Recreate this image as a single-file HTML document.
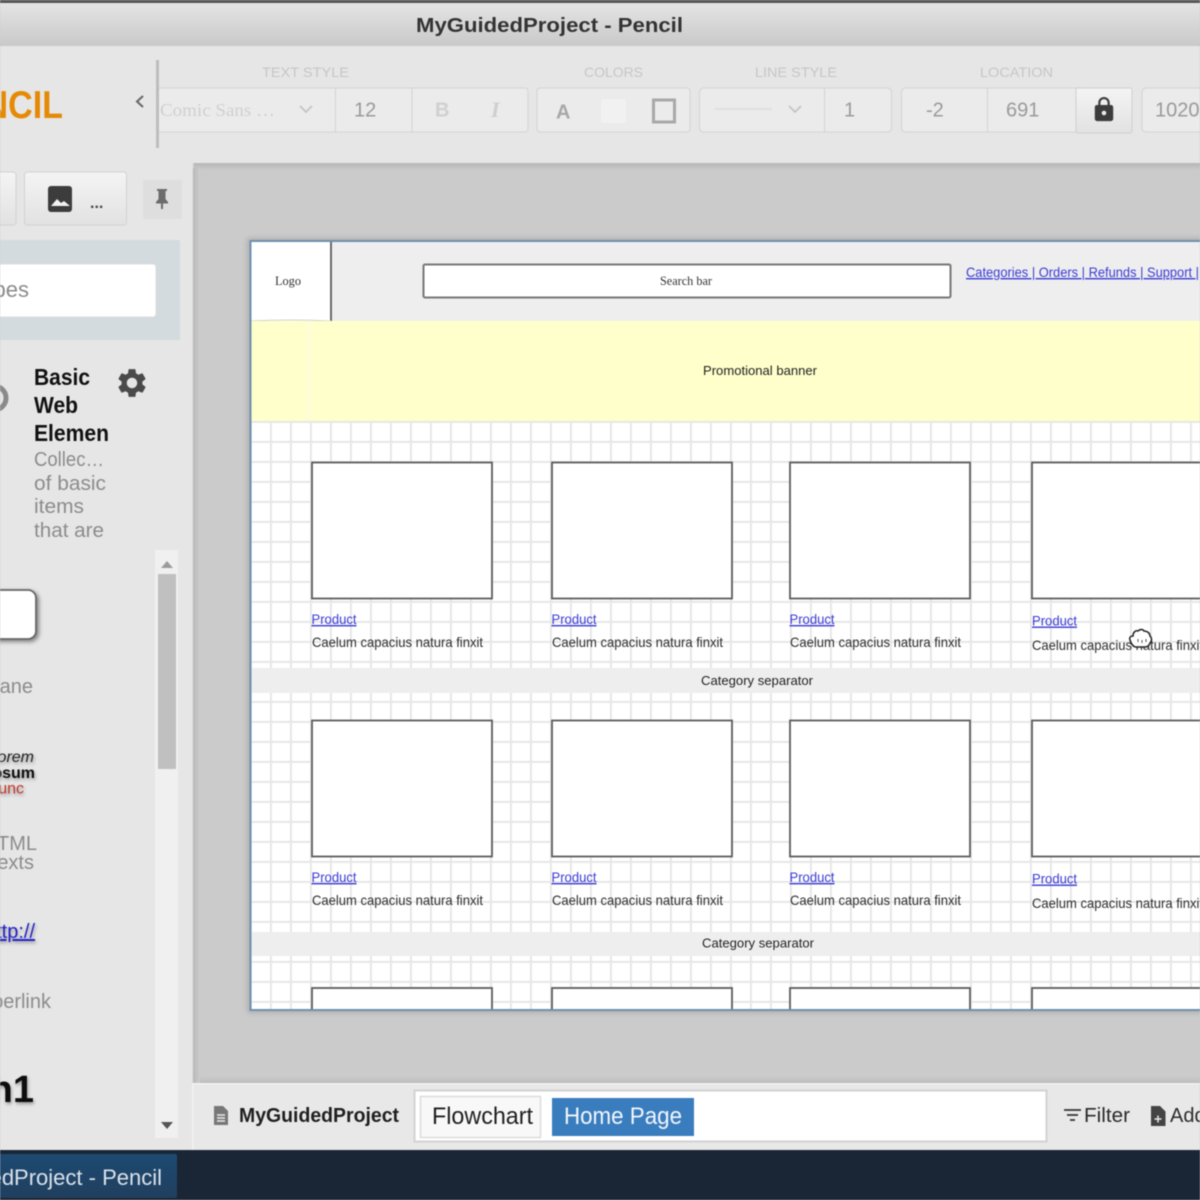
<!DOCTYPE html>
<html><head><meta charset="utf-8"><style>
html,body{margin:0;padding:0;width:1200px;height:1200px;overflow:hidden;background:#cbcbcb}
svg{display:block;filter:blur(.5px)}
text{font-family:"Liberation Sans",sans-serif}
.s{font-family:"Liberation Serif",serif}
.l{fill:#3b3bd6;text-decoration:underline;font-size:14px}
.c{fill:#2e2e2e;font-size:14px}
.lab{fill:#c6c6c6;font-size:14px}
.v{fill:#9a9a9a;font-size:20px}
.g{fill:#8c8c8c;font-size:20px}
.box{fill:#fff;stroke:#5c5c5c;stroke-width:1.800}
</style></head><body>
<svg width="1200" height="1200" viewBox="0 0 1200 1200" xmlns="http://www.w3.org/2000/svg">
<defs>
<linearGradient id="tb" x1="0" y1="0" x2="0" y2="1"><stop offset="0" stop-color="#e6e6e6"/><stop offset="1" stop-color="#c9c9c9"/></linearGradient>
<linearGradient id="btn" x1="0" y1="0" x2="0" y2="1"><stop offset="0" stop-color="#f4f4f4"/><stop offset="1" stop-color="#e2e2e2"/></linearGradient>
<linearGradient id="task" x1="0" y1="0" x2="0" y2="1"><stop offset="0" stop-color="#1d4a72"/><stop offset="1" stop-color="#213f5e"/></linearGradient>
<linearGradient id="sv" x1="0" y1="0" x2="0" y2="1"><stop offset="0" stop-color="#b6b6b6"/><stop offset="1" stop-color="#cbcbcb"/></linearGradient>
<linearGradient id="sh2" x1="0" y1="0" x2="1" y2="0"><stop offset="0" stop-color="#b9b9b9"/><stop offset="1" stop-color="#cbcbcb"/></linearGradient>
<linearGradient id="sb" x1="0" y1="0" x2="0" y2="1"><stop offset="0" stop-color="#cbcbcb"/><stop offset="1" stop-color="#bcbcbc"/></linearGradient>
<pattern id="grid" x="251" y="422" width="20" height="20" patternUnits="userSpaceOnUse"><rect width="20" height="20" fill="#fff"/><rect x="19" width="1" height="20" fill="#e3e3e3"/><rect x="0" width="1" height="20" fill="#ebebeb"/><rect y="19" width="20" height="1" fill="#e3e3e3"/><rect y="0" width="20" height="1" fill="#ebebeb"/></pattern>
<filter id="sh" x="-30%" y="-30%" width="160%" height="160%"><feDropShadow dx="2" dy="2" stdDeviation="2" flood-color="#000" flood-opacity=".45"/></filter>
<filter id="ts" x="-20%" y="-20%" width="140%" height="150%"><feDropShadow dx="1" dy="2" stdDeviation="1.500" flood-color="#000" flood-opacity=".35"/></filter>
<filter id="bl" x="-5%" y="-5%" width="110%" height="110%"><feGaussianBlur stdDeviation="2.500"/></filter>
</defs>

<rect width="1200" height="1200" fill="#cbcbcb"/>

<!-- title bar -->
<rect width="1200" height="46" fill="url(#tb)"/>
<rect width="1200" height="3" fill="#555"/>
<text x="416" y="32" font-size="20" font-weight="bold" fill="#333" textLength="267" lengthAdjust="spacingAndGlyphs">MyGuidedProject - Pencil</text>

<!-- toolbar -->
<rect y="46" width="1200" height="117" fill="#e6e6e6"/>
<rect y="163" x="192" width="1008" height="7" fill="url(#sv)"/>
<text x="63" y="118" text-anchor="end" font-size="39" font-weight="bold" fill="#e58a06" textLength="125" lengthAdjust="spacingAndGlyphs">PENCIL</text>
<path d="M143 96l-6 5.500 6 5.500" fill="none" stroke="#666" stroke-width="2"/>
<text class="lab" x="262" y="77" textLength="87" lengthAdjust="spacingAndGlyphs">TEXT STYLE</text>
<text class="lab" x="584" y="77" textLength="59" lengthAdjust="spacingAndGlyphs">COLORS</text>
<text class="lab" x="755" y="77" textLength="82" lengthAdjust="spacingAndGlyphs">LINE STYLE</text>
<text class="lab" x="980" y="77" textLength="73" lengthAdjust="spacingAndGlyphs">LOCATION</text>

<g fill="#ebebeb" stroke="#d6d6d6" stroke-width="1.200">
<rect x="150" y="88" width="378" height="44" rx="3"/>
<rect x="537" y="88" width="153" height="44" rx="3"/>
<rect x="699.500" y="88" width="192" height="44" rx="4"/>
<rect x="901.500" y="88" width="185" height="44" rx="4"/>
<rect x="1142" y="88" width="70" height="44" rx="4"/>
<path d="M335.500 88v44M412 88v44M824.500 88v44M987.500 88v44" fill="none"/>
</g>
<rect x="148" y="60" width="8" height="88" fill="#e6e6e6"/>
<rect x="156" y="60" width="3" height="88" fill="#bdbdbd"/>
<text class="s" x="160" y="116" font-size="18" fill="#d0d0d0" textLength="115" lengthAdjust="spacingAndGlyphs">Comic Sans …</text>
<path d="M300 106l6 6 6-6" fill="none" stroke="#c4c4c4" stroke-width="1.800"/>
<text class="v" x="354" y="116.500">12</text>
<text x="435" y="116.500" font-size="20" font-weight="bold" fill="#d0d0d0">B</text>
<text class="s" x="491" y="117" font-size="22" font-weight="bold" font-style="italic" fill="#cfcfcf">I</text>
<text x="556" y="118.500" font-size="20" font-weight="bold" fill="#a8a8a8">A</text>
<rect x="601" y="99" width="25" height="24" rx="2" fill="#f1f1f1"/>
<rect x="653.500" y="100" width="21" height="22" fill="none" stroke="#a8a8a8" stroke-width="3"/>
<rect x="715" y="108" width="57" height="2" fill="#dfdfdf"/>
<path d="M789 106l6 6 6-6" fill="none" stroke="#c4c4c4" stroke-width="1.800"/>
<text class="v" x="844" y="116.500">1</text>
<text class="v" x="926" y="116.500">-2</text>
<text class="v" x="1006" y="116.500">691</text>
<rect x="1076" y="88" width="56" height="45" rx="2" fill="url(#btn)" stroke="#cfcfcf"/>
<path transform="translate(1090.200 95.800) scale(1.150)" fill="#3c3c3c" d="M18 8h-1V6c0-2.760-2.240-5-5-5S7 3.240 7 6v2H6c-1.100 0-2 .9-2 2v10c0 1.100.9 2 2 2h12c1.100 0 2-.9 2-2V10c0-1.100-.9-2-2-2zm-6 9c-1.100 0-2-.9-2-2s.9-2 2-2 2 .9 2 2-.9 2-2 2zm3.100-9H8.900V6c0-1.710 1.390-3.100 3.100-3.100 1.710 0 3.100 1.390 3.100 3.100v2z"/>
<text class="v" x="1155" y="116.500">1020</text>

<!-- sidebar -->
<rect y="163" width="192" height="987" fill="#e6e6e6"/>
<rect x="192" y="163" width="1.500" height="920" fill="#dedede"/>
<rect x="193" y="168" width="7" height="915" fill="url(#sh2)"/>
<rect x="-10" y="172" width="26" height="53" rx="3" fill="url(#btn)" stroke="#d2d2d2"/>
<rect x="24.500" y="172" width="102" height="53" rx="3" fill="url(#btn)" stroke="#d2d2d2"/>
<rect x="48" y="186" width="24" height="26" rx="3" fill="#3c3c3c"/>
<path d="M51 206l6-7 4 4 3-2 6 5z" fill="#f2f2f2"/>
<text x="90" y="208" font-size="16" font-weight="bold" fill="#444">...</text>
<rect x="143" y="180" width="39" height="39" rx="1" fill="#dedede"/>
<path d="M157 189h10v2h-1.500v8l2.500 3v1.500h-5v5.500h-2v-5.500h-5v-1.500l2.500-3v-8h-1.500z" fill="#6c6c6c"/>

<rect y="240" width="180" height="100" fill="#d3dbdf"/>
<rect x="-6" y="264" width="162" height="53" rx="3" fill="#fff" stroke="#dcdcdc"/>
<text x="29" y="297" text-anchor="end" font-size="22" fill="#8b8b8b">Search shapes</text>

<circle cx="-6" cy="398" r="12" fill="none" stroke="#8a8a8a" stroke-width="5"/>
<text x="34" y="385" font-size="23" font-weight="bold" fill="#111" textLength="56" lengthAdjust="spacingAndGlyphs">Basic</text>
<text x="34" y="413" font-size="23" font-weight="bold" fill="#111" textLength="44" lengthAdjust="spacingAndGlyphs">Web</text>
<text x="34" y="441" font-size="23" font-weight="bold" fill="#111" textLength="75" lengthAdjust="spacingAndGlyphs">Elemen</text>
<text class="g" x="34" y="466" textLength="70" lengthAdjust="spacingAndGlyphs">Collec…</text>
<text class="g" x="34" y="490" textLength="72" lengthAdjust="spacingAndGlyphs">of basic</text>
<text class="g" x="34" y="513" textLength="50" lengthAdjust="spacingAndGlyphs">items</text>
<text class="g" x="34" y="537" textLength="70" lengthAdjust="spacingAndGlyphs">that are</text>
<path transform="translate(114.600 365.600) scale(1.450)" fill="#4a4a4a" fill-rule="evenodd" d="M19.140 12.940c.04-.3.06-.61.06-.94 0-.32-.02-.64-.07-.94l2.030-1.580c.18-.14.23-.41.12-.61l-1.920-3.320c-.12-.22-.37-.29-.59-.22l-2.390.96c-.5-.38-1.030-.7-1.620-.94l-.36-2.540c-.04-.24-.24-.41-.48-.41h-3.840c-.24 0-.43.17-.47.41l-.36 2.540c-.59.24-1.130.57-1.620.94l-2.390-.96c-.22-.08-.47 0-.59.22L2.740 8.870c-.12.21-.08.47.12.61l2.030 1.580c-.05.3-.09.63-.09.94s.02.64.07.94l-2.030 1.580c-.18.14-.23.41-.12.61l1.920 3.320c.12.22.37.29.59.22l2.390-.96c.5.38 1.030.7 1.620.94l.36 2.540c.05.24.24.41.48.41h3.840c.24 0 .44-.17.47-.41l.36-2.540c.59-.24 1.130-.56 1.620-.94l2.390.96c.22.08.47 0 .59-.22l1.920-3.320c.12-.22.07-.47-.12-.61l-2.010-1.580zM12 15.600c-1.980 0-3.600-1.620-3.600-3.600s1.620-3.600 3.600-3.600 3.600 1.620 3.600 3.600-1.620 3.600-3.600 3.600z"/>

<rect x="155" y="550" width="23" height="588" fill="#f0f0f0"/>
<rect x="158" y="574" width="18" height="195" fill="#c0c0c0"/>
<path d="M161 568l6-7 6 7z" fill="#9b9b9b"/>
<path d="M161 1122h12l-6 7z" fill="#555"/>

<rect x="-10" y="590" width="46" height="49" rx="8" fill="#fff" stroke="#666" stroke-width="1.800" filter="url(#sh)"/>
<text class="g" x="33" y="693" text-anchor="end">Frane</text>
<g filter="url(#ts)">
<text x="34" y="762" text-anchor="end" font-size="16" font-style="italic" fill="#222">Lorem</text>
<text x="35" y="778" text-anchor="end" font-size="16" font-weight="bold" fill="#111">Ipsum</text>
<text x="24" y="793.500" text-anchor="end" font-size="16" fill="#c0392b">Nunc</text>
</g>
<text class="g" x="37" y="850" text-anchor="end">HTML</text>
<text class="g" x="34" y="869" text-anchor="end">Texts</text>
<text x="35" y="938" text-anchor="end" font-size="20" fill="#2222c8" text-decoration="underline" filter="url(#ts)">http://</text>
<text class="g" x="51" y="1008" text-anchor="end">Hyperlink</text>
<text x="34" y="1102" text-anchor="end" font-size="38" font-weight="bold" fill="#111" filter="url(#ts)">h1</text>

<!-- wireframe page -->
<rect x="247" y="238" width="960" height="775" fill="#9a9a9a" opacity=".55" filter="url(#bl)"/>
<rect x="250" y="241" width="960" height="769" fill="url(#grid)"/>
<rect x="251" y="241" width="949" height="80" fill="#eeeeee"/>
<rect x="251" y="241" width="80" height="80" fill="#fff"/>
<path d="M331 241v80" stroke="#5c5c5c" stroke-width="1.800"/>
<path d="M251 321q40-2 80 0" stroke="#d0d0d0" fill="none"/>
<text class="s" x="275" y="285" font-size="13" fill="#333" textLength="26" lengthAdjust="spacingAndGlyphs">Logo</text>
<rect x="423.500" y="264.500" width="527" height="33" rx="1.500" fill="#fff" stroke="#777" stroke-width="2"/>
<text class="s" x="660" y="285" font-size="13" fill="#333" textLength="52" lengthAdjust="spacingAndGlyphs">Search bar</text>
<text class="l" x="966" y="277" textLength="233" lengthAdjust="spacingAndGlyphs">Categories | Orders | Refunds | Support |</text>
<rect x="251" y="321" width="949" height="100" fill="#ffffcc"/>
<rect x="308" y="321" width="2" height="100" fill="#fcfce6"/>
<text x="703" y="375" font-size="13" fill="#222" textLength="114" lengthAdjust="spacingAndGlyphs">Promotional banner</text>

<rect x="251" y="668" width="949" height="25" fill="#eeeeee"/>
<text x="701" y="685" font-size="13" fill="#222" textLength="112" lengthAdjust="spacingAndGlyphs">Category separator</text>
<rect x="251" y="932" width="949" height="24" fill="#eeeeee"/>
<text x="702" y="947.500" font-size="13" fill="#222" textLength="112" lengthAdjust="spacingAndGlyphs">Category separator</text>

<rect class="box" x="312" y="462.500" width="180" height="136"/>
<rect class="box" x="552" y="462.500" width="180" height="136"/>
<rect class="box" x="790" y="462.500" width="180" height="136"/>
<rect class="box" x="1032" y="462.500" width="180" height="136"/>
<rect class="box" x="312" y="720.500" width="180" height="136"/>
<rect class="box" x="552" y="720.500" width="180" height="136"/>
<rect class="box" x="790" y="720.500" width="180" height="136"/>
<rect class="box" x="1032" y="720.500" width="180" height="136"/>
<rect class="box" x="312" y="988" width="180" height="22"/>
<rect class="box" x="552" y="988" width="180" height="22"/>
<rect class="box" x="790" y="988" width="180" height="22"/>
<rect class="box" x="1032" y="988" width="180" height="22"/>

<text class="l" x="311.500" y="624" textLength="45" lengthAdjust="spacingAndGlyphs">Product</text>
<text class="l" x="551.500" y="624" textLength="45" lengthAdjust="spacingAndGlyphs">Product</text>
<text class="l" x="789.500" y="624" textLength="45" lengthAdjust="spacingAndGlyphs">Product</text>
<text class="l" x="1032" y="625.500" textLength="45" lengthAdjust="spacingAndGlyphs">Product</text>
<text class="l" x="311.500" y="882" textLength="45" lengthAdjust="spacingAndGlyphs">Product</text>
<text class="l" x="551.500" y="882" textLength="45" lengthAdjust="spacingAndGlyphs">Product</text>
<text class="l" x="789.500" y="882" textLength="45" lengthAdjust="spacingAndGlyphs">Product</text>
<text class="l" x="1032" y="883.500" textLength="45" lengthAdjust="spacingAndGlyphs">Product</text>
<text class="c" x="312" y="647" textLength="171" lengthAdjust="spacingAndGlyphs">Caelum capacius natura finxit</text>
<text class="c" x="552" y="647" textLength="171" lengthAdjust="spacingAndGlyphs">Caelum capacius natura finxit</text>
<text class="c" x="790" y="647" textLength="171" lengthAdjust="spacingAndGlyphs">Caelum capacius natura finxit</text>
<text class="c" x="1032" y="650" textLength="171" lengthAdjust="spacingAndGlyphs">Caelum capacius natura finxit</text>
<text class="c" x="312" y="905" textLength="171" lengthAdjust="spacingAndGlyphs">Caelum capacius natura finxit</text>
<text class="c" x="552" y="905" textLength="171" lengthAdjust="spacingAndGlyphs">Caelum capacius natura finxit</text>
<text class="c" x="790" y="905" textLength="171" lengthAdjust="spacingAndGlyphs">Caelum capacius natura finxit</text>
<text class="c" x="1032" y="908" textLength="171" lengthAdjust="spacingAndGlyphs">Caelum capacius natura finxit</text>

<!-- cursor -->
<path d="M1130 640c-1-3 1-4 3-4 0-4 3-6 5-5 2-2 5-2 6 0 3 0 6 2 6 5 2 2 2 5 0 7-1 3-3 4-5 4h-9c-3 0-5-4-6-7z" fill="#fff" stroke="#222" stroke-width="1.500"/>
<path d="M1138 639v3M1142 640v3M1146 639v3" stroke="#555" stroke-width="1"/>

<!-- page frame -->
<path d="M1200 241H250.500V1010H1200" fill="none" stroke="#7090b0" stroke-width="2"/>
<rect x="200" y="1076" width="1000" height="7" fill="url(#sb)"/>

<!-- bottom bar -->
<rect x="192" y="1083" width="1008" height="67" fill="#e8e8e8"/>
<rect x="192" y="1083" width="1008" height="1.500" fill="#f2f2f2"/>
<rect x="192" y="1083" width="1.500" height="67" fill="#f2f2f2"/>
<path d="M214 1106h9l5 5v14h-14z" fill="#777"/>
<path d="M217 1115h8M217 1118h8M217 1121h8" stroke="#e8e8e8" stroke-width="1.400"/>
<text x="239" y="1122" font-size="20" font-weight="bold" fill="#1f1f1f" textLength="160" lengthAdjust="spacingAndGlyphs">MyGuidedProject</text>
<rect x="414.500" y="1090.500" width="632" height="51" fill="#fff" stroke="#d2d2d2" stroke-width="2"/>
<rect x="420.500" y="1096.500" width="120" height="41" fill="#f8f8f8" stroke="#dcdcdc" stroke-width="1.500"/>
<text x="432" y="1124" font-size="24" fill="#1f1f1f" textLength="101" lengthAdjust="spacingAndGlyphs">Flowchart</text>
<rect x="552" y="1098" width="142" height="38" fill="#3a7dbf"/>
<text x="564" y="1124" font-size="24" fill="#f2f6fa" textLength="118" lengthAdjust="spacingAndGlyphs">Home Page</text>
<path d="M1064 1110h17M1067 1115h11M1070 1120h5" stroke="#333" stroke-width="1.800"/>
<text x="1084" y="1122" font-size="20" fill="#2b2b2b" textLength="46" lengthAdjust="spacingAndGlyphs">Filter</text>
<path d="M1151 1106h9l5.500 5.500v14.500h-14.500z" fill="#444"/>
<path d="M1154.500 1119h7M1158 1115.500v7" stroke="#e8e8e8" stroke-width="1.500"/>
<text x="1170" y="1122" font-size="20" fill="#2b2b2b">Add</text>

<!-- taskbar -->
<rect y="1150" width="1200" height="50" fill="#1a2635"/>
<rect x="-6" y="1154" width="183" height="44" rx="2" fill="url(#task)"/>
<text x="162" y="1185" text-anchor="end" font-size="22" fill="#d9e2ea">MyGuidedProject - Pencil</text>
</svg>
</body></html>
